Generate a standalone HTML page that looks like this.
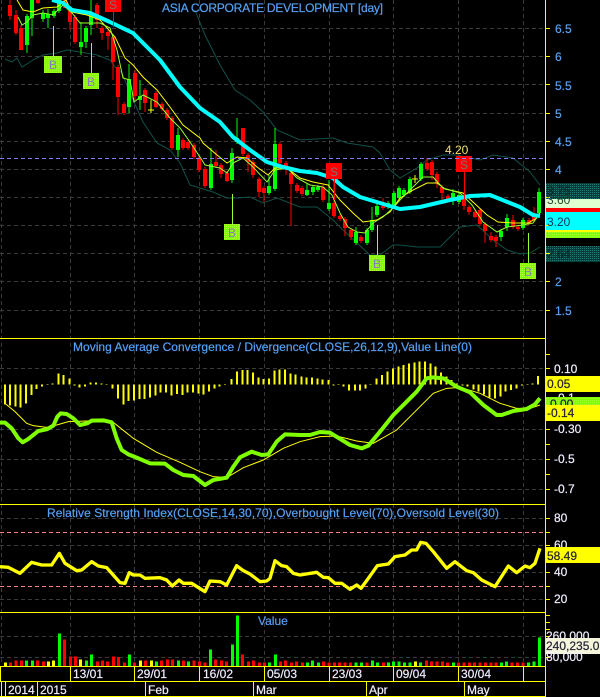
<!DOCTYPE html>
<html><head><meta charset="utf-8"><style>
html,body{margin:0;padding:0;background:#000;width:600px;height:697px;overflow:hidden}
svg{display:block}
text{font-family:"Liberation Sans",sans-serif;font-size:12px}
.b{fill:#55a0f5;stroke:#55a0f5;stroke-width:.2}.w{fill:#eef;stroke:#eef;stroke-width:.2}.k{fill:#223;stroke:#223;stroke-width:.2}
</style></head><body>
<svg width="600" height="697" viewBox="0 0 600 697" xmlns="http://www.w3.org/2000/svg">
<defs>
<pattern id="teal" width="2" height="2" patternUnits="userSpaceOnUse"><rect width="2" height="2" fill="#0a3a3a"/><rect width="1" height="1" fill="#1f7a7a"/></pattern>
<pattern id="lime" width="2" height="2" patternUnits="userSpaceOnUse"><rect width="2" height="2" fill="#80ff00"/><rect width="1" height="1" fill="#a8ff30"/></pattern>
<clipPath id="mc"><rect x="0" y="0" width="545" height="338"/></clipPath>
</defs>
<rect width="600" height="697" fill="#000"/>
<!-- grid -->
<g stroke="#3a3a3a" stroke-dasharray="4 3" fill="none" shape-rendering="crispEdges">
<path d="M0 28.5H545M0 56.5H545M0 84.5H545M0 113.5H545M0 141.5H545M0 169.5H545M0 197.5H545M0 225.5H545M0 253.5H545M0 281.5H545M0 310.5H545"/>
<path d="M0 368.5H545M0 429.5H545M0 459.5H545M0 489.5H545"/>
<path d="M0 518.5H545M0 545.5H545M0 572.5H545M0 599.5H545"/>
<path d="M0 636.5H545M0 657.5H545"/>
<path d="M1.5 0V665M70.5 0V665M134.5 0V665M199.5 0V665M264.5 0V665M329.5 0V665M393.5 0V665M458.5 0V665M523.5 0V665"/>
</g>
<g clip-path="url(#mc)">
<!-- bollinger -->
<g fill="none" stroke="#125048" stroke-width="1">
<path d="M195 10L205 35L220 65L235 90L250 100L263 112L277 130L300 140L333 138L347 143L373 147L380 153L390 170L400 178L417 168L427 160L443 155L457 155L480 160L493 155L513 158L530 172L540 185"/>
<path d="M5 59L12 62L17 58L22 67L33 60L43 55L57 53L67 50L80 52L97 55L110 60L115 67L122 73L130 93L143 122L157 143L170 150L180 163L190 185L200 188L213 192L227 198L237 198L250 197L263 203L277 198L300 207L317 207L333 220L343 230L357 243L370 255L380 255L393 245L400 245L417 247L440 247L460 227L477 225L493 240L507 250L520 254L530 253L540 247"/>
</g>
<!-- wicks -->
<g shape-rendering="crispEdges" stroke-width="1" fill="none">
<path stroke="#f00" d="M10 0V20M16 10V35M21 25V50M38 0V4M65 0V8M70 8V30M75 15V44M97 3V28M102 26V40M108 30V50M113 35V80M118 65V115M124 102V115M135 70V100M145 88V112M156 91V108M162 102V111M167 108V120M172 116V150M183 138V150M188 140V150M194 143V159M199 155V172M205 167V188M216 150V168M221 163V178M227 171V182M243 128V156M248 153V172M253 160V178M259 177V197M264 186V202M280 142V165M286 161V175M291 171V226M297 183V193M302 186V196M323 185V202M334 179V218M340 214V221M345 217V236M351 228V240M361 235V243M383 198V210M427 158V171M432 160V180M437 172V188M442 185V200M448 194V202M464 197V210M469 205V215M475 210V218M480 208V226M485 222V243M491 232V242M496 235V247M513 215V229M518 225V231M529 218V225M534 207V222"/>
<path stroke="#0f0" d="M27 14V53M32 0V36M43 10V22M48 9V28M54 9V18M59 0V13M81 22V55M86 26V48M91 0V35M129 64V113M140 80V110M178 128V157M211 148V190M232 148V183M237 118V144M269 175V195M275 128V191M307 184V196M313 186V195M318 185V192M329 180V211M356 227V245M367 228V245M372 207V232M377 204V217M388 201V209M394 191V207M399 186V200M404 188V197M410 177V194M421 162V181M453 189V205M459 193V204M501 229V241M507 214V231M523 218V230M539 188V215"/>
<path stroke="#ff0" d="M151 100V113M148 110H154M415 175V183M412 179H418"/>
</g>
<!-- bodies -->
<g shape-rendering="crispEdges" stroke-width="4" fill="none">
<path stroke="#f00" d="M10 5V16M16 15V33M21 28V50M38 0V3M65 0V8M70 10V22M75 17V42M97 5V20M102 28V33M108 32V36M113 37V62M118 67V97M124 104V113M135 73V96M145 90V103M156 93V107M162 104V109M167 110V118M172 118V148M183 140V148M188 142V148M194 145V157M199 158V170M205 169V186M216 162V166M221 165V174M227 173V181M243 128V154M248 155V162M253 162V175M259 179V192M264 188V193M280 144V163M286 163V166M291 173V184M297 185V191M302 188V194M323 187V200M334 203V216M340 216V219M345 219V228M351 230V237M361 237V241M383 206V208M427 163V169M432 162V175M437 174V183M442 187V193M448 196V200M464 199V206M469 207V212M475 212V217M480 210V224M485 224V231M491 236V240M496 237V241M513 220V227M518 227V229M529 220V223M534 216V220"/>
<path stroke="#0f0" d="M27 16V45M32 0V18M43 13V19M48 14V18M54 11V16M59 0V11M81 42V47M86 28V42M91 13V25M129 79V107M140 96V100M178 135V150M211 164V188M232 153V180M237 138V142M269 186V193M275 144V189M307 190V195M313 187V192M318 187V190M329 203V209M356 232V243M367 230V243M372 220V230M377 206V215M388 203V207M394 193V205M399 188V198M404 190V195M410 179V192M421 164V179M453 193V199M459 195V202M501 231V237M507 218V227M523 220V228M539 192V213"/>
</g>
<!-- MAs -->
<path fill="none" stroke="#ff0" stroke-width="1" d="M17 0L23 10L33 12L43 8L57 7L66 0M66 0L72 12L87 15L100 20L115 37L125 58L133 65L143 77L157 90L170 107L183 125L200 138L203 143L217 155L227 163L237 157L247 158L257 167L268 175L275 168L287 168L300 178L313 182L328 185L340 200L353 213L363 222L377 220L390 212L400 198L413 190L427 183L437 183L445 189L463 193L473 202L487 215L498 222L513 223L528 223L537 218"/>
<path fill="none" stroke="#9f3" stroke-width="1" d="M18 17L22 25L27 22L33 15L43 13L53 15L63 5L72 13L80 23L100 23L110 28L117 50L123 78L130 80L134 102L143 95L157 102L170 118L180 128L190 142L200 157L205 165L220 168L227 173L233 163L243 158L253 167L267 182L275 170L287 168L297 178L310 185L323 187L332 195L340 213L348 227L357 232L365 233L373 223L383 217L393 208L400 200L413 187L423 177L433 177L443 188L460 193L472 205L483 222L497 232L507 227L523 225L533 223L540 213"/>
<path fill="none" stroke="#0ff" stroke-width="4" stroke-linejoin="round" d="M52 0L63 3L72 10L90 13L110 22L133 33L160 60L180 87L200 108L220 122L233 137L250 150L267 162L283 167L300 171L317 173L333 178L343 187L360 197L380 203L400 209L420 207L450 200L470 196L490 195L500 199L520 207L533 215L540 216"/>
<!-- signals -->
<g shape-rendering="crispEdges">
<path stroke="#9f3" fill="none" d="M53.5 26V57M91.5 43V73M232.5 194V224M377.5 225V255M528.5 233V263"/>
<path stroke="#f00" fill="none" d="M113.5 12V27M334.5 179V200M464.5 172V200"/>
<rect x="44" y="56" width="18" height="17" fill="url(#lime)"/>
<rect x="83" y="73" width="16" height="16" fill="url(#lime)"/>
<rect x="224" y="224" width="16" height="16" fill="url(#lime)"/>
<rect x="369" y="255" width="16" height="16" fill="url(#lime)"/>
<rect x="520" y="263" width="16" height="16" fill="url(#lime)"/>
<rect x="105" y="-3" width="16" height="15" fill="#f00"/>
<rect x="326" y="163" width="16" height="16" fill="#f00"/>
<rect x="456" y="156" width="16" height="16" fill="#f00"/>
</g>
<g fill="#8a78c0" text-anchor="middle">
<text x="53" y="69">B</text><text x="91" y="86">B</text><text x="232" y="237">B</text><text x="377" y="268">B</text><text x="528" y="276">B</text>
</g>
<g fill="#807070" text-anchor="middle">
<text x="113" y="9">S</text><text x="334" y="176">S</text><text x="464" y="169">S</text>
</g>
</g>
<path stroke="#8080ff" stroke-dasharray="4 3" fill="none" shape-rendering="crispEdges" d="M0 158.5H545"/>
<text x="162" y="12" class="b" textLength="221" lengthAdjust="spacing">ASIA CORPORATE DEVELOPMENT [day]</text>
<text x="445" y="154" fill="#f0e070">4.20</text>
<!-- MACD histogram -->
<g transform="translate(0,335) scale(.33333)" fill="none">
<path stroke="#ff0" stroke-width="6" shape-rendering="crispEdges" d="M15 148V208M30 148V212M47 148V215M62 148V218M78 148V205M95 148V180M110 148V162M126 148V155M142 148V150M158 148V145M175 148V115M191 148V120M208 148V130M224 148V151M239 148V157M255 148V155M271 148V142M288 148V142M304 148V145M319 148V147M338 148V160M354 148V190M370 148V208M386 148V198M402 148V197M418 148V192M434 148V192M450 148V188M466 148V182M482 148V172M498 148V172M515 148V182M531 148V177M547 148V180M563 148V172M579 148V173M595 148V175M611 148V178M627 148V170M643 148V160M659 148V155M675 148V150M695 148V132M711 148V110M727 148V105M743 148V105M759 148V112M775 148V127M791 148V132M807 148V130M823 148V107M839 148V103M855 148V103M871 148V115M887 148V118M905 148V125M920 148V128M936 148V128M952 148V130M968 148V133M985 148V135M1000 148V151M1015 148V150M1030 148V155M1047 148V167M1065 148V167M1080 148V167M1096 148V160M1112 148V150M1130 148V130M1146 148V120M1163 148V110M1179 148V100M1195 148V95M1211 148V90M1227 148V85M1243 148V83M1259 148V80M1275 148V80M1291 148V85M1307 148V95M1323 148V112M1339 148V125M1355 148V135M1371 148V145M1387 148V152M1403 148V155M1420 148V163M1436 148V170M1452 148V178M1468 148V187M1485 148V190M1501 148V185M1517 148V170M1533 148V165M1550 148V160M1566 148V152M1582 148V147M1598 148V145M1614 148V123"/>
<path stroke="#ff0" stroke-width="3" d="M15 205L45 230L80 265L100 272L140 277L170 270L205 260L260 258L340 262L400 310L470 352L540 382L600 410L640 425L680 428L730 398L790 375L850 340L900 320L960 305L1010 303L1070 318L1120 325L1190 285L1240 235L1300 175L1340 160L1380 157L1440 175L1500 205L1550 220L1590 220L1620 210"/>
<path stroke="#80ff00" stroke-width="12" stroke-linejoin="round" d="M0 263L15 263L35 280L55 310L68 322L85 312L115 288L140 283L160 272L172 245L182 235L200 237L220 250L240 270L262 265L275 257L310 256L335 262L350 310L365 345L385 358L410 368L450 385L495 386L520 405L550 420L580 423L615 450L640 435L680 428L700 395L720 367L755 350L785 360L805 358L830 320L855 298L900 300L930 300L960 291L990 293L1050 330L1085 340L1105 332L1140 290L1180 240L1220 200L1250 170L1280 130L1300 127L1330 130L1370 155L1410 172L1450 210L1490 240L1505 240L1540 228L1580 222L1605 208L1620 190"/>
</g>
<text x="73" y="351" class="b" textLength="399" lengthAdjust="spacing">Moving Average Convergence / Divergence(CLOSE,26,12,9),Value Line(0)</text>
<!-- RSI -->
<path stroke="#ff8080" stroke-dasharray="4 3" fill="none" shape-rendering="crispEdges" d="M0 532.5H545M0 586.5H545"/>
<g transform="translate(0,500) scale(.33333)" fill="none">
<path stroke="#ff0" stroke-width="10" stroke-linejoin="round" d="M0 200L25 202L60 220L95 187L125 195L155 195L178 160L195 190L230 212L245 210L275 185L295 198L320 203L360 248L375 250L388 218L400 225L420 225L435 235L480 233L500 240L517 258L537 240L550 250L575 250L615 275L630 243L660 245L680 255L710 197L730 212L750 222L780 245L800 243L810 235L825 182L845 197L860 200L880 220L900 225L950 217L970 232L985 233L1005 250L1025 250L1050 268L1070 255L1083 265L1105 235L1132 197L1165 192L1185 170L1215 165L1235 150L1250 150L1262 127L1278 130L1300 155L1340 205L1365 185L1400 212L1420 218L1445 240L1485 260L1525 198L1550 218L1575 198L1590 203L1605 190L1620 145"/>
</g>
<text x="47" y="517" class="b" textLength="452" lengthAdjust="spacing">Relative Strength Index(CLOSE,14,30,70),Overbought Level(70),Oversold Level(30)</text>
<text x="258" y="625" class="b">Value</text>
<!-- Volume -->
<g transform="translate(0,500) scale(.33333)" fill="none" stroke-width="9" shape-rendering="crispEdges">
<path stroke="#f00" d="M31 498V488M48 498V481M64 498V481M113 498V481M130 498V484M194 498V418M211 498V470M226 498V470M292 498V484M308 498V481M323 498V484M340 498V470M355 498V471M373 498V487M404 498V487M436 498V481M485 498V481M502 498V478M517 498V478M550 498V481M582 498V481M598 498V484M615 498V487M647 498V478M664 498V481M680 498V484M728 498V463M745 498V484M760 498V481M778 498V488M793 498V487M842 498V484M857 498V481M875 498V487M890 498V484M907 498V487M970 498V484M987 498V487M1003 498V487M1019 498V487M1035 498V487M1051 498V487M1101 498V487M1150 498V487M1279 498V481M1295 498V484M1311 498V484M1327 498V484M1343 498V487M1376 498V487M1392 498V487M1408 498V487M1424 498V487M1440 498V487M1456 498V487M1473 498V487M1488 498V487M1536 498V487M1553 498V487M1569 498V487"/>
<path stroke="#0f0" d="M80 498V481M97 498V481M178 498V400M259 498V481M274 498V463M389 498V463M470 498V484M535 498V481M566 498V484M631 498V448M697 498V433M712 498V346M809 498V487M826 498V463M923 498V487M938 498V481M955 498V487M1068 498V487M1085 498V487M1117 498V481M1133 498V487M1166 498V487M1181 498V484M1197 498V484M1213 498V487M1230 498V487M1261 498V487M1360 498V487M1504 498V487M1520 498V484M1585 498V487M1602 498V484M1618 498V412"/>
<path stroke="#ff0" d="M16 498V488M146 498V484M160 498V481M242 498V478M421 498V481M454 498V481M1246 498V484"/>
</g>
<!-- right labels blocks -->
<g shape-rendering="crispEdges">
<rect x="546" y="183" width="54" height="16" fill="url(#teal)"/>
<rect x="546" y="199" width="54" height="9" fill="#e0ffd0"/>
<rect x="546" y="208" width="54" height="4" fill="#f00"/>
<rect x="546" y="212" width="54" height="18" fill="#0ff"/>
<rect x="546" y="230" width="54" height="2" fill="#ff0"/>
<rect x="546" y="232" width="54" height="6" fill="url(#lime)"/>
<rect x="546" y="246" width="54" height="16" fill="url(#teal)"/>
<rect x="546" y="376" width="54" height="16" fill="#ff0"/>
</g>
<!-- panel frame -->
<g stroke="#ff0" fill="none" shape-rendering="crispEdges">
<path d="M0 338.5H545M0 504.5H545M0 612.5H545M0 666.5H545M0 681.5H545M0 696.5H545"/>
<path d="M0.5 666V681M70.5 666V681M134.5 666V681M199.5 666V681M264.5 666V681M329.5 666V681M393.5 666V681M458.5 666V681M523.5 666V681"/>
<path d="M1.5 681V696M5.5 681V696M37.5 681V696M145.5 681V696M253.5 681V696M366.5 681V696M464.5 681V696"/>
<path d="M545.5 0V697"/>
<path stroke-width="1" d="M545 28.5H550M545 56.5H550M545 84.5H550M545 113.5H550M545 141.5H550M545 169.5H550M545 197.5H550M545 225.5H550M545 253.5H550M545 281.5H550M545 310.5H550"/>
<path d="M545 354.5H550M545 368.5H550M545 384.5H550M545 399.5H550M545 414.5H550M545 429.5H550M545 444.5H550M545 459.5H550M545 474.5H550M545 489.5H550"/>
<path d="M545 518.5H550M545 532.5H550M545 545.5H550M545 559.5H550M545 572.5H550M545 586.5H550M545 599.5H550"/>
<path d="M545 615.5H550M545 622.5H550M545 629.5H550M545 636.5H550M545 657.5H550"/>
</g>
<!-- axis text -->
<text x="555" y="33" class="b">6.5</text><text x="555" y="61" class="b">6</text><text x="555" y="90" class="b">5.5</text><text x="555" y="118" class="b">5</text><text x="555" y="146" class="b">4.5</text><text x="555" y="174" class="b">4</text><text x="555" y="286" class="b">2</text><text x="555" y="315" class="b">1.5</text>
<text x="547" y="195" fill="#0a2a2a">3.75</text>
<text x="547" y="204" fill="#243">3.60</text>
<text x="547" y="226" fill="#035">3.20</text>
<text x="547" y="258" fill="#0a2a2a">2.64</text>
<text x="554" y="373" class="w">0.10</text>
<text x="547" y="388" class="k">0.05</text>
<text x="554" y="402" class="w">-0.1</text>
<rect x="546" y="397" width="54" height="8" fill="url(#lime)"/>
<text x="550" y="408" class="k">0.00</text>
<rect x="546" y="405" width="54" height="16" fill="#ff0"/>
<text x="547" y="417" class="k">-0.14</text>
<text x="554" y="433" class="w">-0.30</text>
<text x="554" y="463" class="w">-0.5</text>
<text x="554" y="493" class="w">-0.7</text>
<text x="554" y="522" class="w">80</text>
<text x="554" y="549" class="w">60</text>
<rect x="546" y="547" width="54" height="16" fill="#ff0"/>
<text x="547" y="560" class="k">58.49</text>
<text x="554" y="576" class="w">40</text>
<text x="554" y="603" class="w">20</text>
<text x="546" y="640" class="w">260,000</text>
<rect x="546" y="638" width="54" height="16" fill="#f5f5dc"/>
<text x="546" y="650" class="k">240,235.0</text>
<text x="546" y="661" class="w">80,000</text>
<!-- dates -->
<text x="73" y="678" class="w">13/01</text><text x="137" y="678" class="w">29/01</text><text x="203" y="678" class="w">16/02</text><text x="267" y="678" class="w">05/03</text><text x="332" y="678" class="w">23/03</text><text x="396" y="678" class="w">09/04</text><text x="461" y="678" class="w">30/04</text>
<text x="8" y="694" class="w">2014</text><text x="40" y="694" class="w">2015</text><text x="148" y="694" class="w">Feb</text><text x="256" y="694" class="w">Mar</text><text x="369" y="694" class="w">Apr</text><text x="467" y="694" class="w">May</text>
</svg>
</body></html>
